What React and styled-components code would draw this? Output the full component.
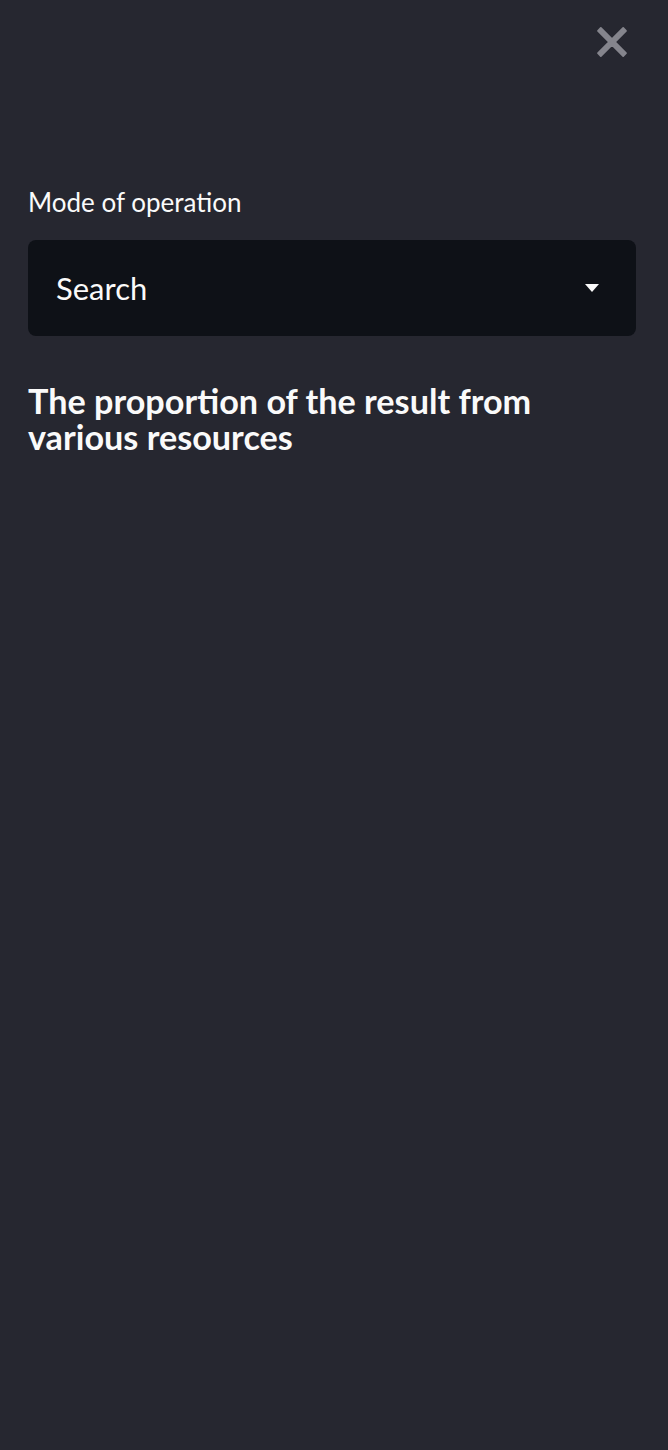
import React from "react";
import styled, { createGlobalStyle } from "styled-components";

const Global = createGlobalStyle`
  html, body { margin: 0; padding: 0; background: #262730; }
  body { font-family: "Source Sans Pro", Lato, "Noto Sans", sans-serif; color: #fafafa; }
  * { box-sizing: border-box; }
`;

const Sidebar = styled.aside`
  width: 668px;
  min-height: 1450px;
  background: #262730;
  padding: 0 32px 0 28px;
  display: flex;
  flex-direction: column;
`;

const TopBar = styled.div`
  height: 84px;
  display: flex;
  justify-content: flex-end;
  align-items: flex-start;
  padding-top: 18px;
`;

const CloseButton = styled.button`
  width: 48px;
  height: 48px;
  padding: 0;
  border: none;
  background: transparent;
  display: flex;
  align-items: center;
  justify-content: center;
  cursor: pointer;
`;

const Label = styled.label`
  display: block;
  margin-top: 100px;
  font-size: 26px;
  line-height: 36px;
  color: #fafafa;
`;

const Select = styled.div`
  margin-top: 20px;
  height: 96px;
  background: #0e1117;
  border-radius: 8px;
  display: flex;
  align-items: center;
  justify-content: space-between;
  padding: 0 36px 0 28px;
  font-size: 31px;
  color: #fafafa;
`;

const Heading = styled.h3`
  margin: 47px 0 0;
  font-size: 34.2px;
  line-height: 36px;
  font-weight: 700;
  color: #fafafa;
`;

export default function App() {
  return (
    <>
      <Global />
      <Sidebar>
        <TopBar>
          <CloseButton aria-label="Close">
            <svg width="48" height="48" viewBox="0 0 24 24">
              <path
                fill="#85858d"
                d="M19 6.41L17.59 5 12 10.59 6.41 5 5 6.41 10.59 12 5 17.59 6.41 19 12 13.41 17.59 19 19 17.59 13.41 12z"
                stroke="#85858d"
                strokeWidth="0.9"
                strokeLinejoin="round"
              />
            </svg>
          </CloseButton>
        </TopBar>
        <Label>Mode of operation</Label>
        <Select>
          <span>Search</span>
          <svg width="16" height="10" viewBox="0 0 16 10">
            <path d="M1 1h14L8 9z" fill="#fafafa" />
          </svg>
        </Select>
        <Heading>The proportion of the result from various resources</Heading>
      </Sidebar>
    </>
  );
}
